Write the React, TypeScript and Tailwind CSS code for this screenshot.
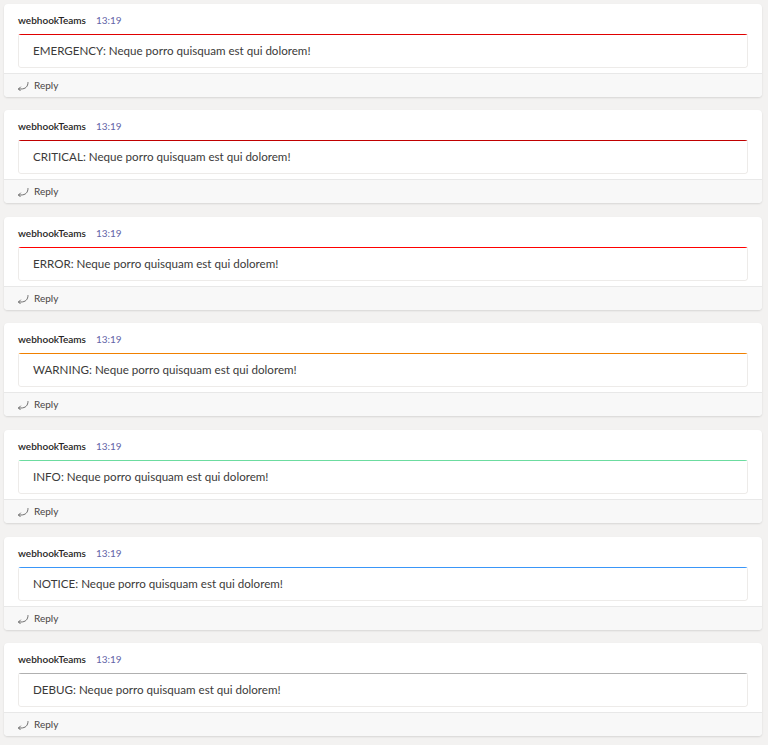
import React from "react";

const messages = [
  { level: "EMERGENCY", color: "bg-[#e00000]", space: "" },
  { level: "CRITICAL", color: "bg-[#c00000]", space: "mt-[13px]" },
  { level: "ERROR", color: "bg-[#ff0000]", space: "mt-[14px]" },
  { level: "WARNING", color: "bg-[#f08000]", space: "mt-[13px]" },
  { level: "INFO", color: "bg-[#6cdca0]", space: "mt-[14px]" },
  { level: "NOTICE", color: "bg-[#3a96f8]", space: "mt-[14px]" },
  { level: "DEBUG", color: "bg-[#b0b0b0]", space: "mt-[13px]" },
];

function ReplyIcon() {
  return (
    <svg width="12" height="10" viewBox="0 0 12 10" fill="none" stroke="#616161" strokeWidth="0.9" strokeLinecap="round" strokeLinejoin="round">
      <path d="M11 1.5 C11 5.5 8.5 8 4 8 H1.5" />
      <path d="M3.5 6 L1.5 8 L3.5 10" />
    </svg>
  );
}

function Message({ level, color, space }: { level: string; color: string; space: string }) {
  return (
    <div className={`${space} bg-white rounded-[4px] shadow-[0_1px_2px_rgba(0,0,0,0.12)] overflow-hidden`}>
      <div className="px-[14px] pt-[9px] pb-[5px]">
        <div className="flex items-baseline gap-[10px] h-[21px]">
          <span className="text-[10px] font-semibold text-[#252423]">webhookTeams</span>
          <span className="text-[10px] text-[#6264a7]">13:19</span>
        </div>
        <div className="rounded-[3px] overflow-hidden">
          <div className={`h-[1px] ${color}`} />
          <div className="border border-t-0 border-[#edebe9] rounded-b-[3px] h-[33px] flex items-center px-[14px]">
            <span className="text-[11.6px] text-[#3b3a39]">{level}: Neque porro quisquam est qui dolorem!</span>
          </div>
        </div>
      </div>
      <div className="bg-[#f8f8f8] border-t border-[#e8e8e8] h-[24px] flex items-center gap-[5px] pl-[13px]">
        <ReplyIcon />
        <span className="text-[10px] text-[#484644]">Reply</span>
      </div>
    </div>
  );
}

export default function App() {
  return (
    <div className="min-h-[745px] bg-[#f3f2f1] pt-[4px] pl-[4px] pr-[6px] flex flex-col font-['Lato',sans-serif]">
      {messages.map((m) => (
        <Message key={m.level} level={m.level} color={m.color} space={m.space} />
      ))}
    </div>
  );
}
